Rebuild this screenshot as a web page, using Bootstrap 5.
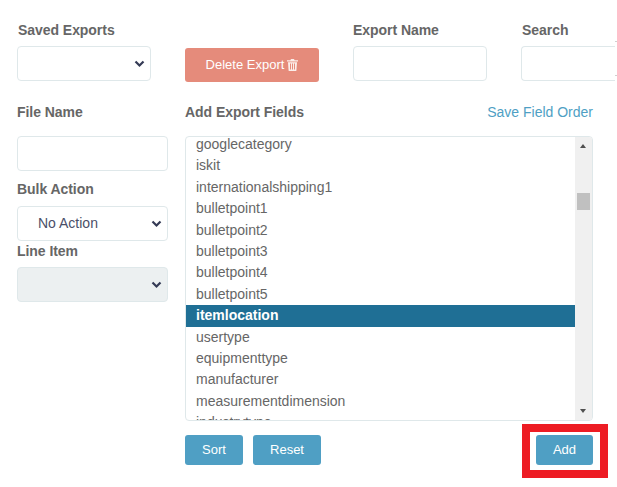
<!DOCTYPE html>
<html lang="en">
<head>
<meta charset="utf-8">
<title>Exports</title>
<link href="https://cdn.jsdelivr.net/npm/bootstrap@5.3.0/dist/css/bootstrap.min.css" rel="stylesheet">
<style>
html, body { overflow: hidden; }
body { font-family: "Liberation Sans", Arial, sans-serif; font-size: 14px; color: #666; background: #fff; width: 617px; height: 487px; }
.page-wrap { padding: 22px 0 0 17px; position: relative; height: 487px; width: 617px; overflow: hidden; }
.top-row { display: flex; }
.top-cell { width: 168px; flex: none; }
.fld-label { display: block; font-weight: 700; color: #666; font-size: 14px; line-height: 16px; margin: 0 0 8px 1px; letter-spacing: -.05px; }
.fld-label.flush { margin-left: 0; }
.fld-ctl { display: block; border: 1px solid #dfe8ea; border-radius: 4px; height: 35px; background-color: #fff; font-size: 14px; color: #4a4f68; padding: 0 9px; box-shadow: none; }
.top-cell .fld-ctl { width: 134px; }
.fld-ctl.form-select { padding: 0 30px 0 20px; background-size: 11px 8px; background-position: right 5px center; background-image: url("data:image/svg+xml,%3csvg xmlns='http://www.w3.org/2000/svg' viewBox='0 0 11 8'%3e%3cpath fill='none' stroke='%23343a55' stroke-width='2.2' d='M1.500 1.500l4 4 4-4'/%3e%3c/svg%3e"); }
.del-btn { margin-top: 26px; width: 134px; height: 34px; padding: 0; border: 0; border-radius: 3px; background: #e58b7b; color: #fff; font-size: 13px; font-weight: 400; display: flex; align-items: center; justify-content: center; gap: 3px; }
.del-btn:hover { background: #e58b7b; color: #fff; }
.search-line { display: flex; width: 96px; }
.top-cell .search-line .fld-ctl { width: 94px; flex: none; border-right: 0; border-radius: 4px 0 0 4px; }
.search-edge { flex: none; width: 2px; height: 35px; margin-top: -5px; border-top: 1px solid #d0d0d0; border-bottom: 1px solid #d0d0d0; }
.lower-row { display: flex; margin-top: 22px; }
.left-col { width: 168px; flex: none; }
.left-col .fld-ctl { width: 151px; }
.left-col .fld-label { margin-left: 0; }
.right-col { width: 408px; flex: none; }
.head-line { height: 16px; margin-bottom: 16px; }
.head-line .fld-label { margin: 0; }
.save-link { color: #4f9fc4; text-decoration: none; font-size: 14px; line-height: 16px; }
.bulk-gap { margin-top: 10px; }
.bulk-label { margin-bottom: 9px; }
.line-gap { margin-top: 2px; }
.line-label { margin-bottom: 8px; }
.fld-ctl.is-off { background-color: #ecf0f1; }
.list-box { height: 285px; border: 1px solid #dfe8ea; border-radius: 4px; overflow: hidden; display: flex; }
.list-rows { flex: 1 1 auto; min-width: 0; overflow: hidden; margin: 0; padding: 0; list-style: none; }
.list-rows li { height: 21.4px; line-height: 21.4px; padding-left: 10px; color: #666; font-size: 14px; white-space: nowrap; }
.list-rows li:first-child { margin-top: -3px; }
.list-rows li.picked { background: #1f6f95; color: #fff; font-weight: 700; }
.scroll-rail { flex: none; width: 17px; background: #f0f0f0; position: relative; }
.rail-thumb { position: absolute; left: 2px; right: 2px; top: 56px; height: 17px; background: #c0c0c0; }
.rail-arrow { position: absolute; left: 5px; width: 0; height: 0; border-left: 3.500px solid transparent; border-right: 3.500px solid transparent; }
.rail-up { top: 7px; border-bottom: 4px solid #505050; }
.rail-down { bottom: 7px; border-top: 4px solid #505050; }
.act-row { display: flex; margin-top: 14px; gap: 10px; }
.act-btn { height: 30px; padding: 0; border: 0; border-radius: 3px; background: #4f9fc4; color: #fff; font-size: 13px; font-weight: 400; line-height: 30px; }
.act-btn:hover { background: #4f9fc4; color: #fff; }
.sort-btn { width: 58px; }
.reset-btn { width: 68px; }
.add-btn { width: 57px; margin-left: auto; }
.red-frame { position: absolute; left: 522px; top: 424px; width: 86px; height: 54px; border: 8px solid #ed1c24; pointer-events: none; }
</style>
</head>
<body>
<div class="page-wrap">
  <div class="top-row">
    <div class="top-cell">
      <label class="fld-label" for="savedSel">Saved Exports</label>
      <select id="savedSel" class="form-select fld-ctl"><option></option></select>
    </div>
    <div class="top-cell">
      <button type="button" class="btn del-btn">Delete Export
        <svg width="11" height="12" viewBox="0 0 11 12" aria-hidden="true"><path fill="#fbeeea" d="M4 0h3l.6 1.200H11v1.300H0V1.200h3.400zM1 3.300h9l-.6 8.100a.7.7 0 0 1-.7.600H2.300a.7.7 0 0 1-.7-.6zM3 4.500v6h1v-6zm2 0v6h1v-6zm2 0v6h1v-6z" fill-rule="evenodd"/></svg>
      </button>
    </div>
    <div class="top-cell">
      <label class="fld-label flush" for="expName">Export Name</label>
      <input id="expName" type="text" class="form-control fld-ctl">
    </div>
    <div class="top-cell">
      <label class="fld-label" for="searchBox">Search</label>
      <div class="search-line">
        <input id="searchBox" type="text" class="form-control fld-ctl">
        <span class="search-edge"></span>
      </div>
    </div>
  </div>
  <div class="lower-row">
    <div class="left-col">
      <label class="fld-label head-line" for="fileName">File Name</label>
      <input id="fileName" type="text" class="form-control fld-ctl">
      <label class="fld-label bulk-gap bulk-label" for="bulkSel">Bulk Action</label>
      <select id="bulkSel" class="form-select fld-ctl"><option>No Action</option></select>
      <label class="fld-label line-gap line-label" for="lineSel">Line Item</label>
      <select id="lineSel" class="form-select fld-ctl is-off" disabled><option></option></select>
    </div>
    <div class="right-col">
      <div class="head-line d-flex justify-content-between">
        <span class="fld-label">Add Export Fields</span>
        <a class="save-link" href="#">Save Field Order</a>
      </div>
      <div class="list-box">
        <ul class="list-rows">
          <li>googlecategory</li>
          <li>iskit</li>
          <li>internationalshipping1</li>
          <li>bulletpoint1</li>
          <li>bulletpoint2</li>
          <li>bulletpoint3</li>
          <li>bulletpoint4</li>
          <li>bulletpoint5</li>
          <li class="picked">itemlocation</li>
          <li>usertype</li>
          <li>equipmenttype</li>
          <li>manufacturer</li>
          <li>measurementdimension</li>
          <li>industrytype</li>
        </ul>
        <div class="scroll-rail">
          <span class="rail-arrow rail-up"></span>
          <span class="rail-thumb"></span>
          <span class="rail-arrow rail-down"></span>
        </div>
      </div>
      <div class="act-row">
        <button type="button" class="btn act-btn sort-btn">Sort</button>
        <button type="button" class="btn act-btn reset-btn">Reset</button>
        <button type="button" class="btn act-btn add-btn">Add</button>
      </div>
    </div>
  </div>
  <div class="red-frame"></div>
</div>
<script src="https://cdn.jsdelivr.net/npm/bootstrap@5.3.0/dist/js/bootstrap.bundle.min.js"></script>
</body>
</html>
